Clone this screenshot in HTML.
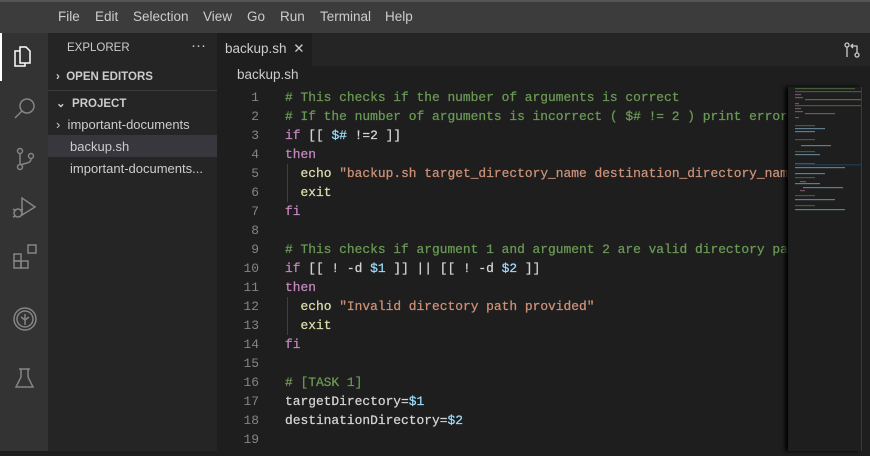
<!DOCTYPE html>
<html><head><meta charset="utf-8"><style>
*{margin:0;padding:0;box-sizing:border-box}
body{width:870px;height:451px;overflow:hidden;background:#1e1e1e;font-family:"Liberation Sans",sans-serif;position:relative}
#menu{position:absolute;left:0;top:0;width:870px;height:33px;background:#3c3c3c;border-top:2px solid #555}
#menu span{position:absolute;top:7px;color:#ccc;font-size:13.5px}
#act{position:absolute;left:0;top:33px;width:48px;height:418px;background:#333}
#side{position:absolute;left:48px;top:33px;width:169px;height:418px;background:#252526;color:#ccc;font-size:13px}
#tabs{position:absolute;left:217px;top:33px;width:653px;height:33px;background:#252526}
#tab{position:absolute;left:0;top:0;width:95px;height:33px;background:#1e1e1e;color:#ccc;font-size:13.5px;padding:8px 0 0 8px}
#crumb{position:absolute;left:237px;top:67px;color:#ccc;font-size:13.5px}
.code{position:absolute;top:88px;font-family:"Liberation Mono",monospace;font-size:12.9px;line-height:19px;white-space:pre}
#nums{left:217px;width:42px;text-align:right;color:#858585}
#src{left:285px;width:503px;overflow:hidden;color:#d4d4d4;-webkit-text-stroke:0.25px}
.c{color:#6a9955}.k{color:#c586c0}.s{color:#ce9178}.v{color:#9cdcfe}.f{color:#dcdcaa}
.guide{position:absolute;left:287px;width:1px;background:#404040}
</style></head><body>
<div id="menu">
<span style="left:58px">File</span><span style="left:95px">Edit</span><span style="left:133px">Selection</span><span style="left:203px">View</span><span style="left:247px">Go</span><span style="left:280px">Run</span><span style="left:320px">Terminal</span><span style="left:385px">Help</span>
</div>
<div id="act">
<div style="position:absolute;left:0;top:0;width:2px;height:48px;background:#fff"></div>
<svg width="48" height="418" fill="none" stroke="#858585" stroke-width="1.5">
<g stroke="#fff"><path d="M20 14h6l4 4v12H20z"/><path d="M20 18h-5v15h10v-3"/></g>
<circle cx="27" cy="73" r="7"/><path d="M22 78l-7 7"/>
<circle cx="20" cy="118" r="2.5"/><circle cx="20" cy="134" r="2.5"/><circle cx="31" cy="123" r="2.5"/><path d="M20 121v10M31 126c0 5-8 4-10 6"/>
<path d="M22 165v17l13-8z"/><circle cx="18" cy="180" r="4"/><path d="M13 176l3 2M13 184l3-1M23 176l-3 2"/>
<rect x="14" y="228" width="7" height="7"/><rect x="21" y="228" width="7" height="7"/><rect x="14" y="221" width="7" height="7"/><rect x="28" y="212" width="8" height="8"/>
<circle cx="25" cy="286" r="11"/><circle cx="25" cy="286" r="8"/><path d="M25 281v11M21 284l4 3 4-3"/>
<path d="M21 336v8l-5 10h17l-5-10v-8M19 336h11"/>
</svg>
</div>
<div id="side">
<div style="position:absolute;left:19px;top:9px;font-size:11.5px">EXPLORER</div>
<div style="position:absolute;left:143px;top:4px;font-size:15px">···</div>
<div style="position:absolute;left:8px;top:38px;font-size:11.5px;font-weight:bold">›&nbsp; OPEN EDITORS</div>
<div style="position:absolute;left:0;top:57px;width:169px;height:1px;background:#3c3c3c"></div>
<div style="position:absolute;left:8px;top:63px;font-size:11.5px;font-weight:bold">⌄&nbsp; PROJECT</div>
<div style="position:absolute;left:8px;top:84px">›&nbsp; important-documents</div>
<div style="position:absolute;left:0;top:102px;width:169px;height:22px;background:#37373d"></div>
<div style="position:absolute;left:22px;top:106px">backup.sh</div>
<div style="position:absolute;left:22px;top:128px">important-documents...</div>
</div>
<div id="tabs"><div id="tab">backup.sh <span style="margin-left:3px">✕</span></div>
<svg style="position:absolute;left:626px;top:8px" width="18" height="18" fill="none" stroke="#ccc" stroke-width="1.3"><circle cx="4" cy="4" r="2"/><circle cx="14" cy="14" r="2"/><path d="M4 6v10M14 12V5h-5M10 3L8 5l2 2"/></svg>
</div>
<div id="crumb">backup.sh</div>
<div class="guide" style="top:164px;height:38px"></div>
<div class="guide" style="top:297px;height:38px"></div>
<div class="code" id="nums">1
2
3
4
5
6
7
8
9
10
11
12
13
14
15
16
17
18
19</div>
<div class="code" id="src"><span class="c"># This checks if the number of arguments is correct</span>
<span class="c"># If the number of arguments is incorrect ( $# != 2 ) print error message</span>
<span class="k">if</span> [[ <span class="v">$#</span> !=2 ]]
<span class="k">then</span>
  <span class="f">echo</span> <span class="s">"backup.sh target_directory_name destination_directory_name"</span>
  <span class="f">exit</span>
<span class="k">fi</span>

<span class="c"># This checks if argument 1 and argument 2 are valid directory paths</span>
<span class="k">if</span> [[ ! -d <span class="v">$1</span> ]] || [[ ! -d <span class="v">$2</span> ]]
<span class="k">then</span>
  <span class="f">echo</span> <span class="s">"Invalid directory path provided"</span>
  <span class="f">exit</span>
<span class="k">fi</span>

<span class="c"># [TASK 1]</span>
targetDirectory=<span class="v">$1</span>
destinationDirectory=<span class="v">$2</span>
</div>
<div style="position:absolute;left:788px;top:87px;width:74px;height:364px;background:#1e1e1e;box-shadow:-3px 0 4px #000"></div>
<svg style="position:absolute;left:795px;top:87px" width="66" height="130" opacity="0.5">
<g fill="#6a9955"><rect x="0" y="1" width="60" height="1.2"/><rect x="0" y="4" width="66" height="1.2"/><rect x="0" y="18" width="66" height="1.2"/><rect x="0" y="38" width="20" height="1.2"/><rect x="0" y="52" width="20" height="1.2"/><rect x="0" y="64" width="20" height="1.2"/><rect x="0" y="76" width="20" height="1.2"/><rect x="0" y="90" width="20" height="1.2"/><rect x="0" y="108" width="20" height="1.2"/><rect x="0" y="118" width="20" height="1.2"/></g>
<g fill="#c586c0"><rect x="0" y="7" width="6" height="1.2"/><rect x="0" y="10" width="8" height="1.2"/><rect x="0" y="16" width="4" height="1.2"/><rect x="0" y="21" width="6" height="1.2"/><rect x="0" y="24" width="8" height="1.2"/><rect x="0" y="30" width="4" height="1.2"/><rect x="5" y="94" width="6" height="1.2"/><rect x="5" y="103" width="5" height="1.2"/></g>
<g fill="#ce9178"><rect x="10" y="12" width="56" height="1.2"/><rect x="10" y="26" width="30" height="1.2"/></g>
<g fill="#9cdcfe"><rect x="0" y="41" width="30" height="1.2"/><rect x="0" y="44" width="20" height="1.2"/><rect x="6" y="58" width="30" height="1.2"/><rect x="0" y="67" width="25" height="1.2"/><rect x="0" y="80" width="50" height="1.2"/><rect x="0" y="86" width="30" height="1.2"/><rect x="0" y="96" width="25" height="1.2"/><rect x="8" y="100" width="40" height="1.2"/><rect x="0" y="112" width="40" height="1.2"/><rect x="0" y="122" width="50" height="1.2"/></g>
<rect x="0" y="77" width="66" height="1.5" fill="#264f78"/>
</svg>
<div style="position:absolute;left:861px;top:87px;width:1px;height:364px;background:#3a3a3a"></div>
</body></html>
